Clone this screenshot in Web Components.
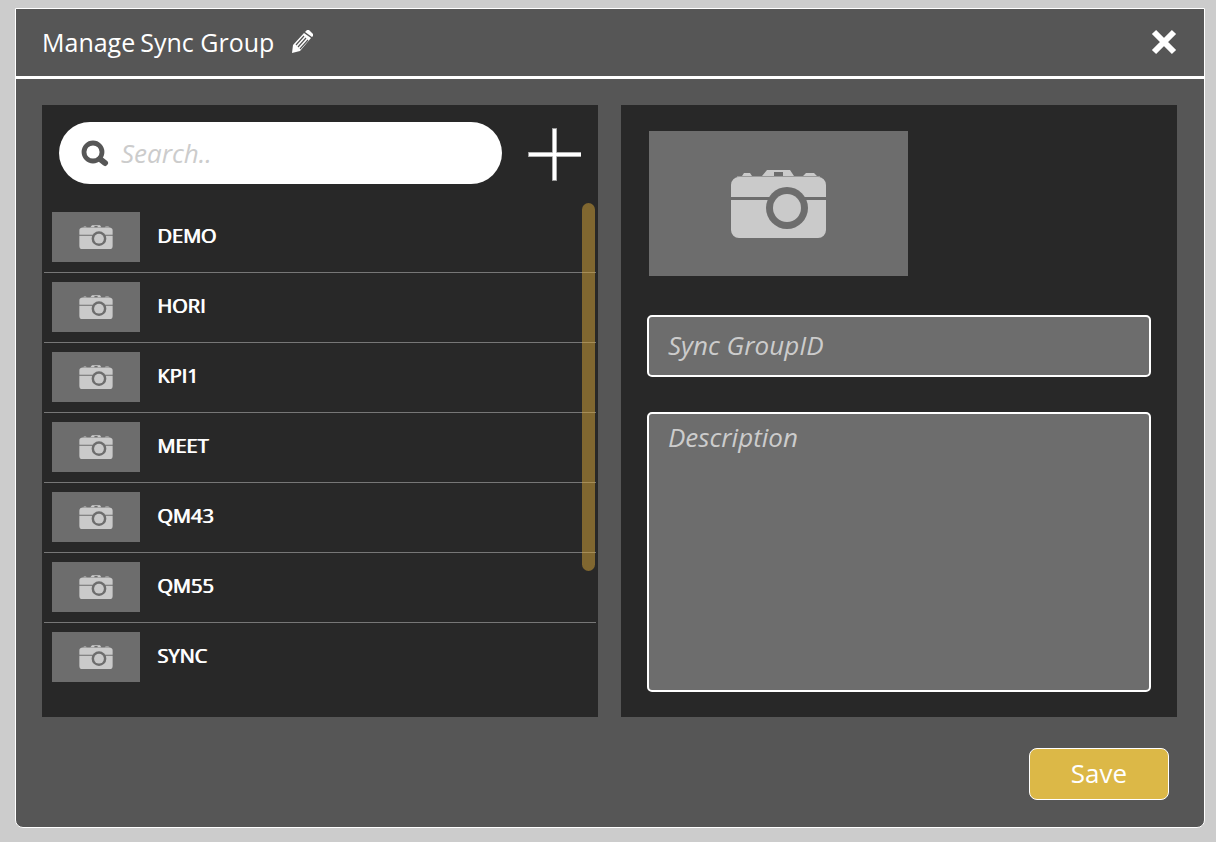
<!DOCTYPE html>
<html lang="en">
<head>
<meta charset="utf-8">
<title>Manage Sync Group</title>
<style>
  html { background: #ccc; }
  body { margin: 8px 11px 14px 15px; font: 25px/34px "Open Sans", "Noto Sans", sans-serif; color: #fff; }
</style>
</head>
<body>
<sync-dialog>
  <span slot="title">Manage</span>
  <span slot="title">Sync Group</span>
  <group-panel slot="panels">
    <group-item>DEMO</group-item>
    <group-item>HORI</group-item>
    <group-item>KPI1</group-item>
    <group-item>MEET</group-item>
    <group-item>QM43</group-item>
    <group-item>QM55</group-item>
    <group-item>SYNC</group-item>
  </group-panel>
  <group-form slot="panels"></group-form>
  <save-button slot="actions">Save</save-button>
</sync-dialog>

<script>
const define = (name, html) => {
  const template = document.createElement('template');
  template.innerHTML = html;
  customElements.define(name, class extends HTMLElement {
    constructor() {
      super();
      this.attachShadow({ mode: 'open' }).append(template.content.cloneNode(true));
    }
  });
};

define('camera-thumb', `
  <style>
    :host { display: flex; align-items: center; justify-content: center; flex: none;
      box-sizing: border-box; width: var(--thumb-width, 88px); height: var(--thumb-height, 50px); background: #6d6d6d; }
    svg { display: block; width: var(--icon-width, 34px); fill: #cacaca; }
  </style>
  <svg viewBox="0 0 97 69" aria-hidden="true">
    <path fill-rule="evenodd" d="M37 1H60L64 7H32ZM44 3V7H53V3Z"/>
    <path d="M14 4H20L22 7H12ZM76 4H84L87 7H73Z"/>
    <path fill="#999" d="M7 7H90V9H7Z"/>
    <path d="M9 8H88A8 8 0 0 1 96 16V28H1V16A8 8 0 0 1 9 8ZM1 31H96V61A8 8 0 0 1 88 69H9A8 8 0 0 1 1 61Z"/>
    <circle cx="57" cy="39" r="21" fill="#6d6d6d"/>
    <circle cx="57" cy="39" r="14"/>
  </svg>`);

define('sync-dialog', `
  <style>
    :host { display: block; box-sizing: border-box; border: 1px solid #fff; border-radius: 0 0 8px 8px; background: #565656; }
    header { display: flex; align-items: center; justify-content: space-between; box-sizing: border-box;
      min-height: 70px; padding: 0 24px 2px 26px; border-bottom: 3px solid #fff; }
    .heading { display: flex; align-items: center; gap: 18px; }
    h1 { display: flex; gap: 5px; margin: 0; font: inherit; }
    button { display: block; padding: 0; border: 0; background: none; color: #fff; cursor: pointer; }
    svg { display: block; }
    main { display: grid; grid-template-columns: 1fr 1fr; gap: 23px; padding: 26px 27px 31px 26px; }
    footer { display: flex; justify-content: flex-end; padding: 0 35px 27px; }
  </style>
  <header>
    <div class="heading">
      <h1><slot name="title"></slot></h1>
      <button aria-label="Rename group">
        <svg width="22" height="24" viewBox="0 0 22 24">
          <path fill="currentColor" d="M0 23 1 15 12 3 19 8 8 21ZM13 2 15 0H17L21 4V6L20 7Z"/>
          <path fill="none" stroke="#565656" stroke-width="1.2" d="M4 15 12 6M6 17 14 8M8 19 16 10"/>
        </svg>
      </button>
    </div>
    <button aria-label="Close">
      <svg width="32" height="32" viewBox="0 0 32 32"><path d="M6 6 26 26M26 6 6 26" stroke="currentColor" stroke-width="6"/></svg>
    </button>
  </header>
  <main><slot name="panels"></slot></main>
  <footer><slot name="actions"></slot></footer>`);

define('group-panel', `
  <style>
    :host { display: block; box-sizing: border-box; min-height: 612px; padding: 17px 2px; background: #282828; }
    .tools { display: flex; align-items: center; gap: 26px; padding: 0 15px; }
    .search { display: flex; align-items: center; gap: 12px; flex: 1; min-width: 0; box-sizing: border-box; height: 62px;
      padding: 0 22px; border-radius: 31px; background: #fff; color: #565656; }
    svg { display: block; flex: none; }
    input { flex: 1; min-width: 0; padding: 0; border: 0; outline: 0; background: none; font: inherit; font-size: 26px; }
    input::placeholder { color: #ccc; font-style: italic; opacity: 1; }
    button { padding: 2px 0 0; border: 0; background: none; color: #fff; }
    .list { position: relative; margin-top: 19px; }
    .bar { position: absolute; top: 0; right: 1px; width: 13px; height: 368px; border-radius: 7px; background: #d8a638; opacity: .5; }
  </style>
  <div class="tools">
    <label class="search">
      <svg width="28" height="28" viewBox="0 0 28 28" fill="none" stroke="currentColor"><circle cx="12" cy="13" r="9" stroke-width="4.8"/><path d="M19 20 24 24" stroke-width="6" stroke-linecap="round"/></svg>
      <input type="search" placeholder="Search.." aria-label="Search groups">
    </label>
    <button aria-label="Add group">
      <svg width="53" height="53" viewBox="0 0 53 53"><path d="M0 26.5H53M26.5 0V53" stroke="#999" stroke-width="5"/><path d="M1 26.5H53M26.5 1V52" stroke="#fff" stroke-width="3.4"/></svg>
    </button>
  </div>
  <div class="list" role="list"><slot></slot><div class="bar"></div></div>`);

define('group-item', `
  <style>
    :host { display: flex; align-items: center; gap: 17px; box-sizing: border-box; height: 70px; padding: 0 8px 1px;
      border-bottom: 1px solid #777; font-size: 20px; line-height: 28px; }
    :host(:last-of-type) { border-color: transparent; }
    .name { padding-bottom: 3px; text-shadow: 1px 0 currentColor; }
  </style>
  <camera-thumb></camera-thumb>
  <span class="name"><slot></slot></span>`);

define('group-form', `
  <style>
    :host { display: flex; flex-direction: column; align-items: stretch; box-sizing: border-box; padding: 26px 26px 25px; background: #282828; }
    camera-thumb { --thumb-width: 259px; --thumb-height: 145px; --icon-width: 97px; margin: 0 2px 39px; }
    input, textarea { display: block; box-sizing: border-box; width: 100%; margin: 0; padding: 0 19px; border: 2px solid #fff;
      border-radius: 5px; outline: 0; background: #6d6d6d; color: #fff; font: inherit; font-size: 26px; }
    input { height: 62px; margin-bottom: 35px; padding-bottom: 2px; }
    textarea { flex: 1; min-height: 280px; padding-top: 6px; resize: none; }
    ::placeholder { color: #ccc; font-style: italic; opacity: 1; }
  </style>
  <camera-thumb></camera-thumb>
  <input type="text" placeholder="Sync GroupID" aria-label="Sync GroupID">
  <textarea placeholder="Description" aria-label="Description"></textarea>`);

define('save-button', `
  <style>
    :host { display: block; }
    button { display: block; box-sizing: border-box; width: 140px; height: 52px; padding: 0 0 2px; border: 1px solid #fff;
      border-radius: 8px; background: #dcb847; color: #fff; font: inherit; font-size: 26px; }
  </style>
  <button><slot></slot></button>`);
</script>
</body>
</html>
